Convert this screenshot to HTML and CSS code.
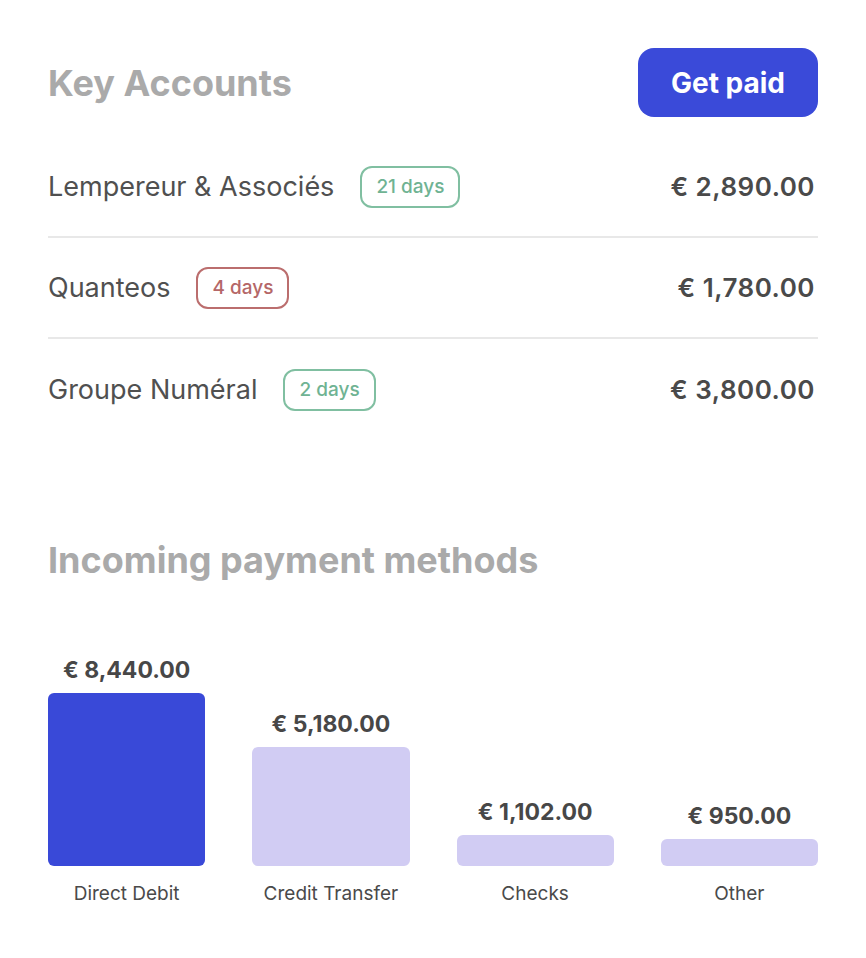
FILE: index.html
```html
<!DOCTYPE html>
<html lang="en">
<head>
<meta charset="utf-8">
<title>Key Accounts</title>
<link rel="stylesheet" href="styles.css">
</head>
<body>
<main class="page">
  <section class="accounts">
    <header class="header">
      <h1 class="title">Key Accounts</h1>
      <button class="btn-primary">Get paid</button>
    </header>
    <ul class="account-list">
      <li class="account-row">
        <div class="account-info">
          <span class="account-name">Lempereur &amp; Associés</span>
          <span class="badge badge-ok">21 days</span>
        </div>
        <span class="amount">€ 2,890.00</span>
      </li>
      <li class="account-row">
        <div class="account-info">
          <span class="account-name">Quanteos</span>
          <span class="badge badge-late">4 days</span>
        </div>
        <span class="amount">€ 1,780.00</span>
      </li>
      <li class="account-row">
        <div class="account-info">
          <span class="account-name">Groupe Numéral</span>
          <span class="badge badge-ok">2 days</span>
        </div>
        <span class="amount">€ 3,800.00</span>
      </li>
    </ul>
  </section>

  <section class="methods">
    <h2 class="title">Incoming payment methods</h2>
    <div class="chart">
      <div class="col">
        <span class="value">€ 8,440.00</span>
        <div class="bar bar-main" style="height:173px"></div>
        <span class="label">Direct Debit</span>
      </div>
      <div class="col">
        <span class="value">€ 5,180.00</span>
        <div class="bar" style="height:119px"></div>
        <span class="label">Credit Transfer</span>
      </div>
      <div class="col">
        <span class="value">€ 1,102.00</span>
        <div class="bar" style="height:31px"></div>
        <span class="label">Checks</span>
      </div>
      <div class="col">
        <span class="value">€ 950.00</span>
        <div class="bar" style="height:27px"></div>
        <span class="label">Other</span>
      </div>
    </div>
  </section>
</main>
</body>
</html>
```

FILE: styles.css
```css
* { box-sizing: border-box; }

html, body {
  margin: 0;
  padding: 0;
  background: #ffffff;
}

body {
  font-family: Inter, "Noto Sans", "Liberation Sans", sans-serif;
  color: #4a4a4a;
}

.page {
  width: 866px;
  padding: 48px 48px 0 48px;
}

.header {
  display: flex;
  align-items: center;
  justify-content: space-between;
  height: 69px;
}

.title {
  margin: 0;
  font-size: 36px;
  font-weight: 700;
  color: #aaaaaa;
  line-height: 44px;
  letter-spacing: 0;
}

.btn-primary {
  width: 180px;
  height: 69px;
  border: none;
  border-radius: 16px;
  background: #3a4ad9;
  color: #ffffff;
  font-family: inherit;
  font-size: 28px;
  font-weight: 700;
  padding: 0;
}

.account-list {
  list-style: none;
  margin: 20px 0 0 0;
  padding: 0;
}

.account-row {
  display: flex;
  align-items: center;
  justify-content: space-between;
  height: 101px;
  border-bottom: 2px solid #e8e8e8;
}

.account-row:last-child {
  border-bottom: none;
}

.account-info {
  display: flex;
  align-items: center;
  gap: 26px;
}

.account-name {
  font-size: 27px;
  font-weight: 400;
  color: #505050;
}

.badge {
  display: inline-flex;
  align-items: center;
  justify-content: center;
  height: 42px;
  padding: 0 14px;
  border: 2px solid;
  border-radius: 12px;
  font-size: 19px;
  font-weight: 500;
}

.badge-ok {
  border-color: #80bfa1;
  color: #6fb393;
}

.badge-late {
  border-color: #bb6e6e;
  color: #b56767;
}

.amount {
  font-size: 26px;
  font-weight: 600;
  letter-spacing: 0.5px;
  color: #4a4a4a;
  padding-right: 3px;
}

.methods {
  margin-top: 98px;
}

.chart {
  display: grid;
  grid-template-columns: repeat(4, 1fr);
  column-gap: 47px;
  align-items: end;
  margin-top: 73px;
}

.col {
  display: flex;
  flex-direction: column;
  align-items: stretch;
  justify-content: flex-end;
}

.value {
  text-align: center;
  font-size: 23px;
  font-weight: 700;
  color: #474747;
  line-height: 30px;
  margin-bottom: 8px;
}

.bar {
  width: 100%;
  border-radius: 6px;
  background: #d1ccf3;
}

.bar-main {
  background: #3949d8;
}

.label {
  text-align: center;
  font-size: 19px;
  font-weight: 400;
  color: #4a4a4a;
  line-height: 24px;
  margin-top: 16px;
}
```
